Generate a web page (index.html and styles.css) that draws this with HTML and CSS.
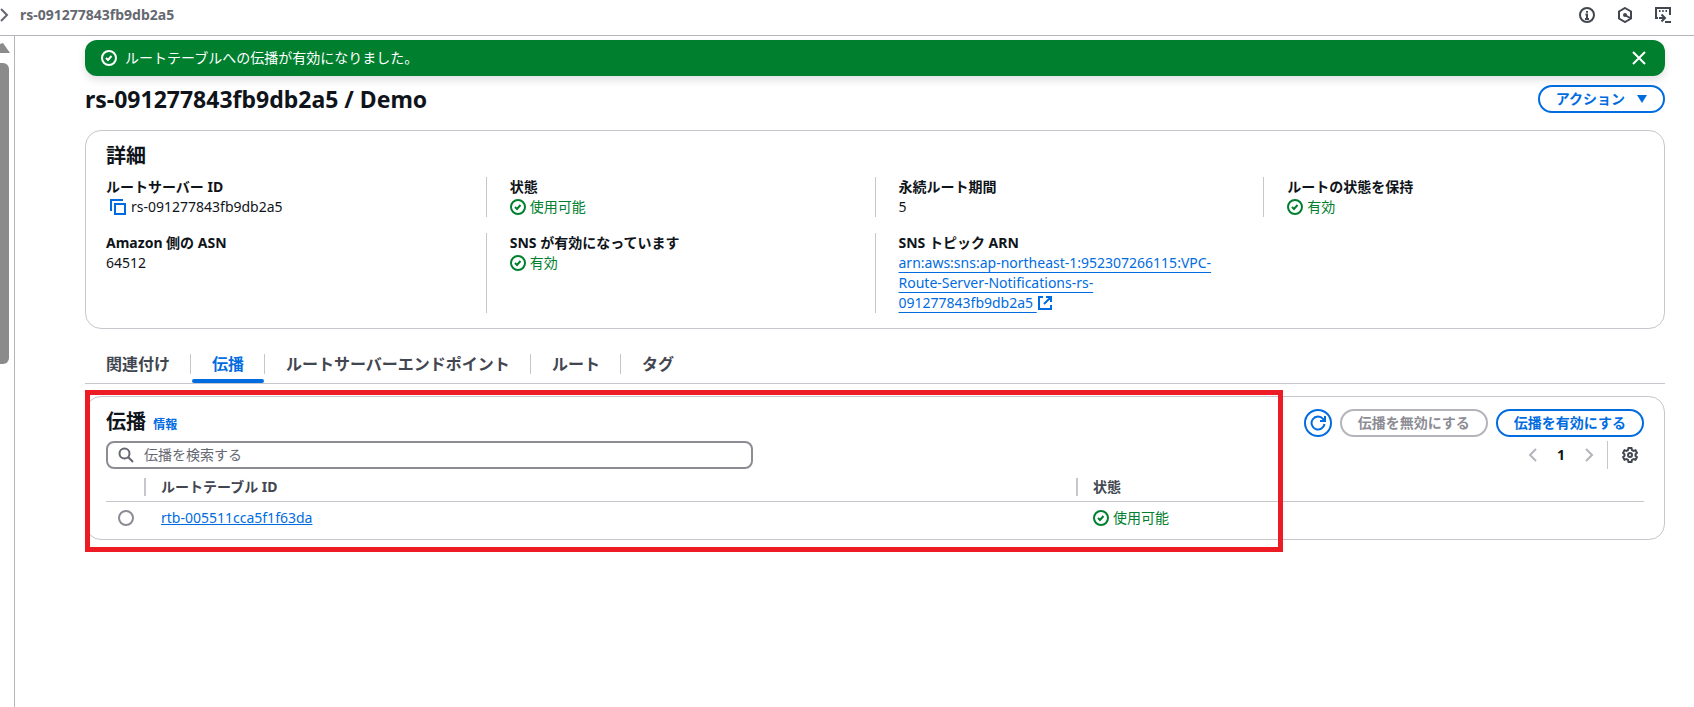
FILE: index.html
```html
<!DOCTYPE html>
<html lang="ja">
<head>
    <meta charset="UTF-8">
    <meta name="viewport" content="width=device-width, initial-scale=1.0">
    <title>rs-091277843fb9db2a5 / Demo</title>
    <link rel="stylesheet" href="styles.css">
</head>
<body>
    <!-- Shared icons -->
    <svg class="icon-defs" aria-hidden="true">
        <symbol id="icon-check" viewBox="0 0 16 16">
            <circle cx="8" cy="8" r="7"/>
            <path d="M5 8l2 2 3.5-4"/>
        </symbol>
        <symbol id="icon-left" viewBox="0 0 16 16">
            <path d="M11 2L5 8l6 6"/>
        </symbol>
        <symbol id="icon-right" viewBox="0 0 16 16">
            <path d="M5 2l6 6-6 6"/>
        </symbol>
    </svg>

    <header class="topbar">
        <nav class="breadcrumb">
            <svg class="icon"><use href="#icon-right"/></svg>
            <span>rs-091277843fb9db2a5</span>
        </nav>
        <div class="topbar-tools">
            <button class="icon-btn" aria-label="Info">
                <svg class="icon" viewBox="0 0 16 16"><circle cx="8" cy="8" r="7"/><path d="M8 12V7.500H6.500M6 12h4M8 4v1.800"/></svg>
            </button>
            <button class="icon-btn" aria-label="Diagnostics">
                <svg class="icon" viewBox="0 0 16 16"><path d="M8 1l6 3.500v7L8 15l-6-3.500v-7z"/><path d="M8 8l5 3"/><circle cx="8" cy="8" r="1"/></svg>
            </button>
            <button class="icon-btn" aria-label="CloudShell">
                <svg class="icon" viewBox="0 0 16 16"><path d="M3 11H1V1h14v7M10 15h6"/><path d="M4 4h1.500M7.200 4h1.500M10.500 4H12M4 11h5M6.500 7.500L10 11l-3.500 3.500"/></svg>
            </button>
        </div>
    </header>

    <div class="layout">
        <aside class="side-scroll">
            <div class="scroll-arrow"></div>
            <div class="scroll-thumb"></div>
        </aside>

        <main class="content">
            <div class="flash" role="status">
                <svg class="icon"><use href="#icon-check"/></svg>
                <span class="flash-text">ルートテーブルへの伝播が有効になりました。</span>
                <button class="icon-btn" aria-label="閉じる">
                    <svg class="icon" viewBox="0 0 16 16"><path d="M2 2l12 12M14 2L2 14"/></svg>
                </button>
            </div>

            <div class="page-header">
                <h1>rs-091277843fb9db2a5 / Demo</h1>
                <button class="btn">アクション
                    <svg class="caret" viewBox="0 0 10 8"><path d="M0 0h10L5 8z"/></svg>
                </button>
            </div>

            <section class="panel details">
                <h2>詳細</h2>
                <dl class="detail-grid">
                    <div class="detail">
                        <dt>ルートサーバー ID</dt>
                        <dd class="copy-value">
                            <button class="icon-btn" aria-label="コピー">
                                <svg class="icon" viewBox="0 0 16 16"><path d="M1 12V1h12"/><path d="M5 5h10v10H5z"/></svg>
                            </button>
                            rs-091277843fb9db2a5
                        </dd>
                    </div>
                    <div class="detail">
                        <dt>状態</dt>
                        <dd class="status"><svg class="icon"><use href="#icon-check"/></svg>使用可能</dd>
                    </div>
                    <div class="detail">
                        <dt>永続ルート期間</dt>
                        <dd>5</dd>
                    </div>
                    <div class="detail">
                        <dt>ルートの状態を保持</dt>
                        <dd class="status"><svg class="icon"><use href="#icon-check"/></svg>有効</dd>
                    </div>
                    <div class="detail">
                        <dt>Amazon 側の ASN</dt>
                        <dd>64512</dd>
                    </div>
                    <div class="detail">
                        <dt>SNS が有効になっています</dt>
                        <dd class="status"><svg class="icon"><use href="#icon-check"/></svg>有効</dd>
                    </div>
                    <div class="detail">
                        <dt>SNS トピック ARN</dt>
                        <dd class="arn">
                            <a href="#">arn:aws:sns:ap-northeast-1:952307266115:VPC-Route-Server-Notifications-rs-091277843fb9db2a5 <svg class="icon" viewBox="0 0 16 16"><path d="M6 2H2v12h12v-4M9 2h5v5M14 2L7 9"/></svg></a>
                        </dd>
                    </div>
                </dl>
            </section>

            <div class="tabs" role="tablist">
                <button class="tab" role="tab">関連付け</button>
                <button class="tab active" role="tab" aria-selected="true">伝播</button>
                <button class="tab" role="tab">ルートサーバーエンドポイント</button>
                <button class="tab" role="tab">ルート</button>
                <button class="tab" role="tab">タグ</button>
            </div>

            <div class="tab-content">
                <section class="panel propagation">
                    <div class="panel-header">
                        <h2>伝播 <a class="info" href="#">情報</a></h2>
                        <div class="actions">
                            <button class="btn btn-round" aria-label="更新">
                                <svg class="icon" viewBox="0 0 16 16"><path d="M14.500 9A6.500 6.500 0 1 1 13 3.800L14.500 5.500M15 1v5h-5"/></svg>
                            </button>
                            <button class="btn" disabled>伝播を無効にする</button>
                            <button class="btn">伝播を有効にする</button>
                        </div>
                    </div>

                    <div class="filter-row">
                        <label class="search">
                            <svg class="icon" viewBox="0 0 16 16"><circle cx="6.500" cy="6.500" r="5"/><path d="M10.300 10.300L15 15"/></svg>
                            <input type="text" placeholder="伝播を検索する" aria-label="伝播を検索する">
                        </label>
                        <div class="pagination">
                            <button class="icon-btn" aria-label="前のページ" disabled><svg class="icon"><use href="#icon-left"/></svg></button>
                            <button class="page-number">1</button>
                            <button class="icon-btn" aria-label="次のページ" disabled><svg class="icon"><use href="#icon-right"/></svg></button>
                            <div class="preferences">
                                <button class="icon-btn" aria-label="設定">
                                    <svg class="icon" viewBox="0 0 16 16"><path d="M6.500 1h3l.5 2 1.500.9 2-.6 1.500 2.600L13.500 7.300v1.400L15 10.100l-1.500 2.600-2-.6L10 13l-.5 2h-3L6 13l-1.500-.9-2 .6L1 10.100l1.500-1.400V7.300L1 5.900l1.500-2.600 2 .6L6 3z"/><circle cx="8" cy="8" r="2"/></svg>
                                </button>
                            </div>
                        </div>
                    </div>

                    <table class="rows">
                        <thead>
                            <tr>
                                <th class="col-select"></th>
                                <th class="col-id">ルートテーブル ID</th>
                                <th>状態</th>
                            </tr>
                        </thead>
                        <tbody>
                            <tr>
                                <td class="col-select"><input type="radio" name="row" aria-label="rtb-005511cca5f1f63da"></td>
                                <td><a href="#">rtb-005511cca5f1f63da</a></td>
                                <td><span class="status"><svg class="icon"><use href="#icon-check"/></svg>使用可能</span></td>
                            </tr>
                        </tbody>
                    </table>
                </section>
                <div class="highlight"></div>
            </div>
        </main>
    </div>
</body>
</html>
```
FILE: styles.css
```css
* {
    box-sizing: border-box;
}

body {
    margin: 0;
    min-height: 100vh;
    display: flex;
    flex-direction: column;
    background: #fff;
    color: #0f141a;
    font-family: "Noto Sans", "Noto Sans CJK JP", sans-serif;
    font-size: 14px;
    line-height: 20px;
}

h1, h2, dl, dd {
    margin: 0;
}

h1 {
    font-size: 23px;
    line-height: 28px;
}

h2 {
    font-size: 20px;
    line-height: 24px;
}

a {
    color: #006ce0;
}

button {
    font: inherit;
    cursor: pointer;
}

.icon-defs {
    display: none;
}

.icon {
    width: 16px;
    height: 16px;
    flex: none;
    fill: none;
    stroke: currentColor;
    stroke-width: 2;
}

.icon-btn {
    display: flex;
    padding: 0;
    border: 0;
    background: none;
    color: inherit;
}

.icon-btn:disabled {
    color: #b4b4bb;
}

/* Top bar */
.topbar {
    display: flex;
    justify-content: space-between;
    align-items: center;
    height: 36px;
    padding: 0 23px 6px 0;
    border-bottom: 1px solid #b4b4bb;
}

.breadcrumb {
    display: flex;
    align-items: center;
    gap: 8px;
    margin-left: -4px;
    color: #656871;
    font-size: 14px;
    font-weight: bold;
}

.topbar-tools {
    display: flex;
    gap: 22px;
    color: #424650;
}

/* Layout */
.layout {
    flex: 1;
    display: flex;
}

.side-scroll {
    width: 15px;
    padding-top: 7px;
    border-right: 1px solid #b4b4bb;
}

.scroll-arrow {
    width: 10px;
    height: 10px;
    margin-bottom: 10px;
    background: #8b8b8b;
    clip-path: polygon(0 10%, 30% 0, 100% 100%, 0 100%);
}

.scroll-thumb {
    width: 9px;
    height: 301px;
    background: #8b8b8b;
    border-radius: 0 6px 6px 0;
}

.content {
    flex: 1;
    min-width: 0;
    padding: 4px 29px 40px 70px;
}

/* Green message */
.flash {
    display: flex;
    align-items: center;
    gap: 8px;
    height: 36px;
    padding: 0 18px 0 16px;
    border-radius: 12px;
    background: #00802f;
    color: #fff;
    box-shadow: 0 4px 8px rgba(0, 7, 22, 0.12);
}

.flash-text {
    flex: 1;
}

.page-header {
    display: flex;
    justify-content: space-between;
    align-items: center;
    margin: 9px 0 17px;
}

.btn {
    display: inline-flex;
    align-items: center;
    gap: 12px;
    height: 28px;
    padding: 0 16px;
    border: 2px solid #006ce0;
    border-radius: 20px;
    background: #fff;
    color: #006ce0;
    font-weight: bold;
}

.btn:disabled {
    border-color: #b4b4bb;
    color: #8c8c94;
    cursor: default;
}

.btn-round {
    padding: 0 4px;
}

.caret {
    width: 10px;
    height: 8px;
    fill: currentColor;
}

/* Panels */
.panel {
    border: 1px solid #c6c6cd;
    border-radius: 16px;
    padding: 12px 20px;
}

.details {
    padding-top: 13px;
}

.detail-grid {
    display: grid;
    grid-template-columns: repeat(4, 1fr);
    row-gap: 16px;
    margin: 9px -8px 3px -9px;
}

.detail {
    padding: 0 44px 0 23px;
    border-left: 1px solid #c6c6cd;
}

.detail:nth-child(4n + 1) {
    padding-left: 9px;
    border-left: 0;
}

dt {
    font-weight: bold;
}

.status {
    display: flex;
    align-items: center;
    gap: 4px;
    color: #00802f;
}

.copy-value {
    display: flex;
    align-items: center;
    gap: 5px;
    padding-left: 4px;
}

.copy-value .icon-btn {
    color: #006ce0;
}

.arn a {
    text-underline-offset: 4px;
}

.arn .icon {
    vertical-align: -3px;
}

/* Tabs */
.tabs {
    display: flex;
    margin-top: 16px;
    padding-left: 1px;
    border-bottom: 1px solid #c6c6cd;
}

.tab {
    position: relative;
    padding: 9px 20px;
    border: 0;
    background: none;
    color: #424650;
    font-size: 16px;
    font-weight: bold;
}

.tab + .tab {
    margin-left: 2px;
}

/* divider between tabs */
.tab + .tab::before {
    content: "";
    position: absolute;
    left: -2px;
    top: 9px;
    height: 20px;
    border-left: 1px solid #c6c6cd;
}

.tab.active {
    color: #006ce0;
}

.tab.active::after {
    content: "";
    position: absolute;
    left: 0;
    right: 0;
    bottom: 0;
    height: 4px;
    border-radius: 2px;
    background: #006ce0;
}

/* Propagation list */
.tab-content {
    position: relative;
    margin-top: 12px;
}

.propagation {
    padding-bottom: 5px;
}

.panel-header,
.filter-row,
.actions,
.pagination {
    display: flex;
    align-items: center;
}

.panel-header,
.filter-row {
    justify-content: space-between;
}

.panel-header {
    margin-bottom: 4px;
}

.info {
    margin-left: 2px;
    font-size: 12px;
    text-decoration: none;
}

.actions {
    gap: 8px;
}

.search {
    display: flex;
    align-items: center;
    gap: 10px;
    width: 42.1%;
    height: 28px;
    padding: 0 10px;
    border: 2px solid #8c8c94;
    border-radius: 8px;
    color: #656871;
}

.search input {
    flex: 1;
    min-width: 0;
    padding: 0;
    border: 0;
    outline: 0;
    background: none;
    font: inherit;
}

.search input::placeholder {
    color: #656871;
}

.page-number {
    width: 40px;
    padding: 0;
    border: 0;
    background: none;
    color: #0f141a;
    font-weight: bold;
}

.preferences {
    display: flex;
    align-items: center;
    height: 28px;
    margin-left: 10px;
    padding: 0 6px 0 14px;
    border-left: 1px solid #c6c6cd;
    color: #424650;
}

.rows {
    width: 100%;
    border-collapse: collapse;
    table-layout: fixed;
}

.rows th,
.rows td {
    padding: 6px 0 6px 17px;
    text-align: left;
}

.rows th {
    padding-top: 8px;
    padding-bottom: 4px;
    border-bottom: 1px solid #c6c6cd;
    background: linear-gradient(#c6c6cd, #c6c6cd) no-repeat 0 9px / 2px 18px;
    color: #424650;
}

.rows .col-select {
    width: 38px;
    padding-left: 12px;
    background: none;
}

.rows .col-id {
    width: 60.6%;
}

.rows input {
    display: block;
    appearance: none;
    width: 16px;
    height: 16px;
    margin: 0;
    border: 2px solid #8c8c94;
    border-radius: 50%;
}

/* Red frame over the list */
.highlight {
    position: absolute;
    top: -6px;
    left: 0;
    width: 75.8%;
    height: calc(100% + 18px);
    border: 5px solid #ed1c24;
    pointer-events: none;
}
```
